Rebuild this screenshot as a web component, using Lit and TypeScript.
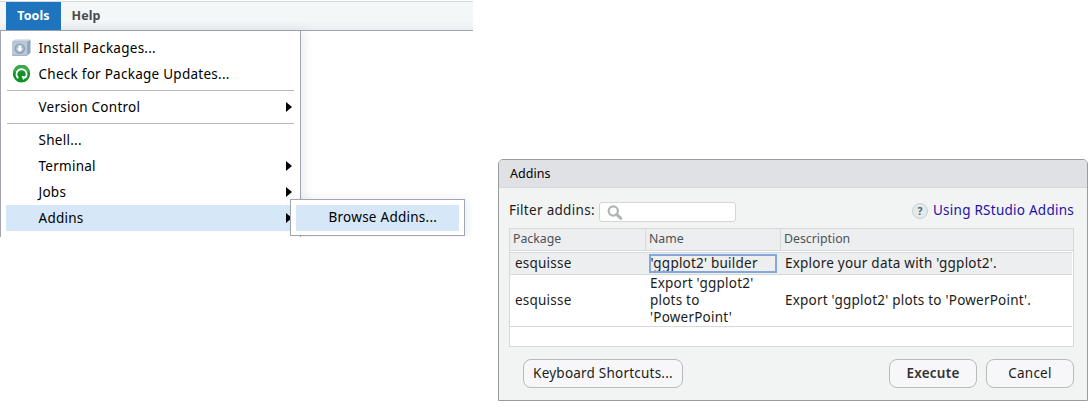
import { LitElement, html, css, svg } from "lit";
import { customElement } from "lit/decorators.js";

const installIcon = svg`<svg width="20" height="18" viewBox="1 0 20 18">
  <path d="M1.5 2.5 4 .8h15.5v13L16.5 16.5z" fill="#8fa4bf"/>
  <path d="M1.5 2.5 4 .8h15.5L16.5 2.5z" fill="#c9d6e5"/>
  <rect x="1" y="2.3" width="15.3" height="14.4" fill="#b8c8da"/>
  <path d="M1.3 16.4h14.4" stroke="#94a6bd" stroke-width=".8"/>
  <circle cx="8.8" cy="9.6" r="4.6" fill="#a9b8ca" stroke="#8c9cb2" stroke-width="1.2"/>
  <path d="M7.5 6.4h2.6v3H12l-3.2 3.5-3.2-3.5h1.9z" fill="#fff"/>
</svg>`;
const updateIcon = svg`<svg width="20" height="18" viewBox="0 0 20 18">
  <circle cx="9.5" cy="9" r="8.6" fill="#0f9224"/>
  <path d="M1 8a8.5 8.5 0 0 1 17 0c-4-2-13-2-17 0z" fill="#3aa84a"/>
  <path d="M6.3 13.2a5.1 5.1 0 1 1 6.8-.3" fill="none" stroke="#fff" stroke-width="1.8"/>
  <path d="m9.6 10.9 5.4.6-3.9 3.6z" fill="#fff"/>
</svg>`;
const searchIcon = svg`<svg width="16" height="16" viewBox="0 0 16 16">
  <circle cx="6.3" cy="6" r="4.6" fill="none" stroke="#b0b5b7" stroke-width="2.3"/>
  <path d="m9.6 9.4 4.2 3.9" stroke="#b0b5b7" stroke-width="3" stroke-linecap="round"/>
</svg>`;

const shared = css`
  :host { display: block; box-sizing: border-box; }
  * { box-sizing: border-box; }
`;

@customElement("tools-menu")
class ToolsMenu extends LitElement {
  static styles = [shared, css`
    :host { width: 473px; height: 237px; font-size: 13.5px; letter-spacing: .26px; position: relative; color: #000; overflow: hidden; }
    .bar { height: 30px; margin-top: 1px; display: flex; padding-left: 6px; border-top: 1px solid #d5dadc;
      border-bottom: 1px solid #a0a5b1; background: linear-gradient(#f3f7f8 65%, #eceff1); font-size: 12.5px; letter-spacing: .1px; font-weight: 700; line-height: 27px; color: #4b4b4b; }
    .tab { width: 55px; text-align: center; }
    .tab.on { background: #1e74bd; color: #fff; }
    .help { width: 50px; }
    .menu { width: 301px; height: 206px; border: solid #a0a5b1; border-width: 0 1px; padding: 4px 5px 0; background: #fff; box-shadow: 4px 0 10px rgba(70,80,120,.1); }
    .row { display: flex; align-items: center; height: 26px; padding-left: 6px; line-height: 26px; white-space: nowrap; }
    .icon { width: 20px; height: 18px; margin-right: 6.5px; flex: none; }
    .icon svg { display: block; }
    .text { flex: 1; }
    .on-row { background: #d6e8f7; }
    .sep { height: 1px; background: #b7b9bb; margin: 3px 1px; }
    .arrow { width: 0; height: 0; border: solid transparent; border-width: 5.5px 0 5.5px 6.5px; border-left-color: #000; margin-right: 3px; }
    .sub { position: absolute; left: 290px; top: 199px; width: 175px; height: 37px; border: 1px solid #a0a5b1; background: #fff; padding: 5px; box-shadow: 3px 0 8px rgba(70,80,120,.1); }
    .sub .row { padding-left: 32.5px; height: 26px; line-height: 24px; align-items: flex-start; }
  `];
  item(label: string, arrow = false, icon: unknown = "", on = false) {
    return html`<div class="row ${on ? "on-row" : ""}"><span class="icon">${icon}</span><span class="text">${label}</span>${arrow ? html`<i class="arrow"></i>` : ""}</div>`;
  }
  render() {
    return html`
      <div class="bar"><div class="tab on">Tools</div><div class="tab help">Help</div></div>
      <div class="menu">
        ${this.item("Install Packages...", false, installIcon)}
        ${this.item("Check for Package Updates...", false, updateIcon)}
        <div class="sep"></div>
        ${this.item("Version Control", true)}
        <div class="sep"></div>
        ${this.item("Shell...")}
        ${this.item("Terminal", true)}
        ${this.item("Jobs", true)}
        ${this.item("Addins", true, "", true)}
      </div>
      <div class="sub"><div class="row on-row">Browse Addins...</div></div>`;
  }
}

@customElement("addins-dialog")
class AddinsDialog extends LitElement {
  static styles = [shared, css`
    :host { width: 590px; height: 242px; border: 1px solid #999b9e; border-radius: 5px 5px 0 0; background: #f2f4f4; font-size: 13.5px; letter-spacing: .22px; color: #1c1c1c; overflow: hidden; }
    .title { height: 28px; background: #e0e1e5; border-bottom: 1px solid #d5d7d9; padding-left: 11px; font-size: 12.5px; letter-spacing: .05px; line-height: 27px; color: #000; }
    .filter { display: flex; align-items: center; height: 41px; padding: 4px 13px 0 10px; white-space: nowrap; }
    .label { width: 85px; letter-spacing: .3px; }
    .label, .link { padding-bottom: 2px; }
    .search { width: 137px; height: 20px; margin: 3px 0 0 5px; border: 1px solid #d2d6d8; border-radius: 3px; background: #fff; padding: 2px 0 0 7px; }
    .search svg { display: block; }
    .q { margin-left: auto; width: 16px; height: 16px; border-radius: 50%; border: 1px solid #c7d0d4; background: #e4eaec; color: #56656d; font: 700 10.5px/14px "Noto Sans"; text-align: center; margin-right: 5px; margin-top: 1px; }
    .link { color: #1a12a8; letter-spacing: .25px; }
    .grid { margin: -1px 13px 0 10px; height: 119px; border: 1px solid #d6d8da; background: #fff; }
    .head, .line { display: grid; grid-template-columns: 135px 135px 1fr; }
    .head { height: 22px; background: #edeef0; border-bottom: 1px solid #d6d8da; font-size: 12.3px; letter-spacing: 0; line-height: 19px; color: #4a5357; }
    .head > div { padding-left: 3px; border-left: 1px solid #d6d8da; }
    .head > div:first-child { border: 0; }
    .line { margin-right: 1px; align-items: center; border-bottom: 1px solid #d6d8da; line-height: 17px; height: 52px; }
    .line > div { padding-left: 5px; }
    .line.sel { margin-top: 1px; height: 23px; background: #edeef0; border-top: 1px solid #d6d8da; }
    .line > .focus { outline: 2px solid #84a7dc; margin: 0 5px 0 6px; padding: 0; height: 15px; line-height: 15px; text-indent: -.5px; }
    .buttons { display: flex; gap: 9px; padding: 12px 13px 0 24px; }
    .btn { width: 88px; height: 29px; border: 1px solid #b9babc; border-radius: 8px; background: #f7f7f9; line-height: 26px; text-align: center; }
    .keys { width: 160px; margin-right: auto; }
    .run { font-weight: 600; color: #333; }
  `];
  render() {
    return html`
      <div class="title">Addins</div>
      <div class="filter"><span class="label">Filter addins:</span><div class="search">${searchIcon}</div><div class="q">?</div><span class="link">Using RStudio Addins</span></div>
      <div class="grid">
        <div class="head"><div>Package</div><div>Name</div><div>Description</div></div>
        <div class="line sel"><div>esquisse</div><div class="focus">'ggplot2' builder</div><div>Explore your data with 'ggplot2'.</div></div>
        <div class="line"><div>esquisse</div><div>Export 'ggplot2'<br>plots to<br>'PowerPoint'</div><div>Export 'ggplot2' plots to 'PowerPoint'.</div></div>
      </div>
      <div class="buttons"><div class="btn keys">Keyboard Shortcuts...</div><div class="btn run">Execute</div><div class="btn">Cancel</div></div>`;
  }
}

@customElement("app-root")
class AppRoot extends LitElement {
  static styles = [shared, css`
    :host { display: flex; gap: 25px; width: 1092px; height: 412px; background: #fff; font-family: "Noto Sans", "Open Sans", sans-serif; }
    tools-menu, addins-dialog { flex: none; }
    addins-dialog { margin-top: 159px; }
  `];
  render() {
    return html`<tools-menu></tools-menu><addins-dialog></addins-dialog>`;
  }
}
